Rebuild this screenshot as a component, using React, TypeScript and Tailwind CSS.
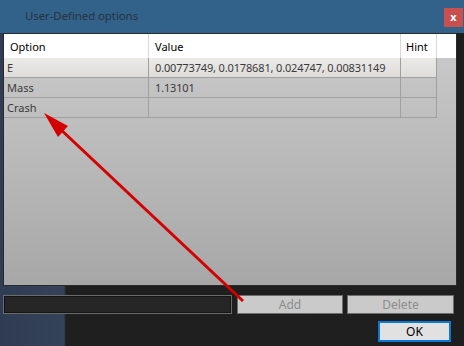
import React from "react";

const font = { fontFamily: '"Segoe UI", "Noto Sans", "Open Sans", sans-serif' };

export default function App() {
  const rows = [
    { o: "E", v: "0.00773749, 0.0178681, 0.024747, 0.00831149", bg: "bg-[linear-gradient(#ebeae7,#dedddb)]" },
    { o: "Mass", v: "1.13101", bg: "" },
    { o: "Crash", v: "", bg: "" },
  ];
  return (
    <div
      className="relative w-[464px] h-[346px] overflow-hidden flex flex-col bg-[linear-gradient(90deg,#2f3c54_0px,#34425a_64px,#1f1f1f_66px,#1e1e1e_100%)]"
      style={font}
    >
      {/* title bar */}
      <div className="h-[33px] shrink-0 bg-[#32618a] flex items-start relative">
        <div className="pl-[25px] pt-[6px] text-[11.5px] tracking-[-0.1px] text-[#27333f] leading-[20px] whitespace-nowrap">User-Defined options</div>
        <div className="absolute right-[1px] top-[8px] w-[19px] h-[19px] bg-[#c9504f] flex items-center justify-center text-white text-[11px] font-bold leading-none pb-[2px]">
          x
        </div>
      </div>

      {/* table */}
      <div className="mx-[3px] w-[454px] h-[253px] shrink-0 border border-[#2a2a2a] flex flex-col bg-[linear-gradient(#cbcbcb,#a7a7a7)] text-[11px] leading-[14px]">
        <div className="h-[24px] shrink-0 bg-white flex text-black">
          <div className="w-[145px] border-r border-[#d8d8d8] pl-[6px] flex items-center pt-[1px]">Option</div>
          <div className="w-[252px] border-r border-[#d8d8d8] pl-[6px] flex items-center pt-[1px]">Value</div>
          <div className="w-[36px] border-r border-[#d8d8d8] pl-[5px] flex items-center pt-[1px]">Hint</div>
          <div className="flex-1" />
        </div>
        {rows.map((r) => (
          <div key={r.o} className="h-[20px] shrink-0 flex text-[#3a3a3a]">
            <div className={`w-[433px] flex border-b border-[#a0a0a0] ${r.bg}`}>
              <div className="w-[145px] border-r border-[#a0a0a0] pl-[3px] flex items-center pt-[1px] whitespace-nowrap">{r.o}</div>
              <div className="w-[252px] border-r border-[#a0a0a0] pl-[6px] flex items-center pt-[1px] whitespace-nowrap tracking-[-0.15px] overflow-hidden">{r.v}</div>
              <div className="w-[36px] border-r border-[#a0a0a0]" />
            </div>
            <div className="flex-1" />
          </div>
        ))}
      </div>

      {/* input + buttons */}
      <div className="mt-[9px] ml-[3px] flex gap-[4px] h-[19px] shrink-0">
        <div className="w-[229px] border border-[#6a6a6a] bg-[#262626] shadow-[inset_0_0_0_1px_#151515]" />
        <div className="ml-[1px] w-[106px] border border-[#6d6d6d] bg-[#cacaca] text-[#8c8c8c] text-[12px] flex items-center justify-center">Add</div>
        <div className="w-[107px] border border-[#6d6d6d] bg-[#cacaca] text-[#8c8c8c] text-[12px] flex items-center justify-center">Delete</div>
      </div>
      <div className="mt-[7px] ml-[378px] w-[73px] h-[21px] border-2 border-[#0a78d6] bg-[#e1e1e1] text-black text-[12px] flex items-center justify-center">
        OK
      </div>

      {/* annotation arrow */}
      <svg className="absolute left-0 top-0" width="464" height="346" viewBox="0 0 464 346">
        <line x1="243" y1="301" x2="58" y2="127" stroke="#d40000" strokeWidth="3" />
        <polygon points="44,113 68,126 58,137" fill="#d40000" />
      </svg>
    </div>
  );
}
